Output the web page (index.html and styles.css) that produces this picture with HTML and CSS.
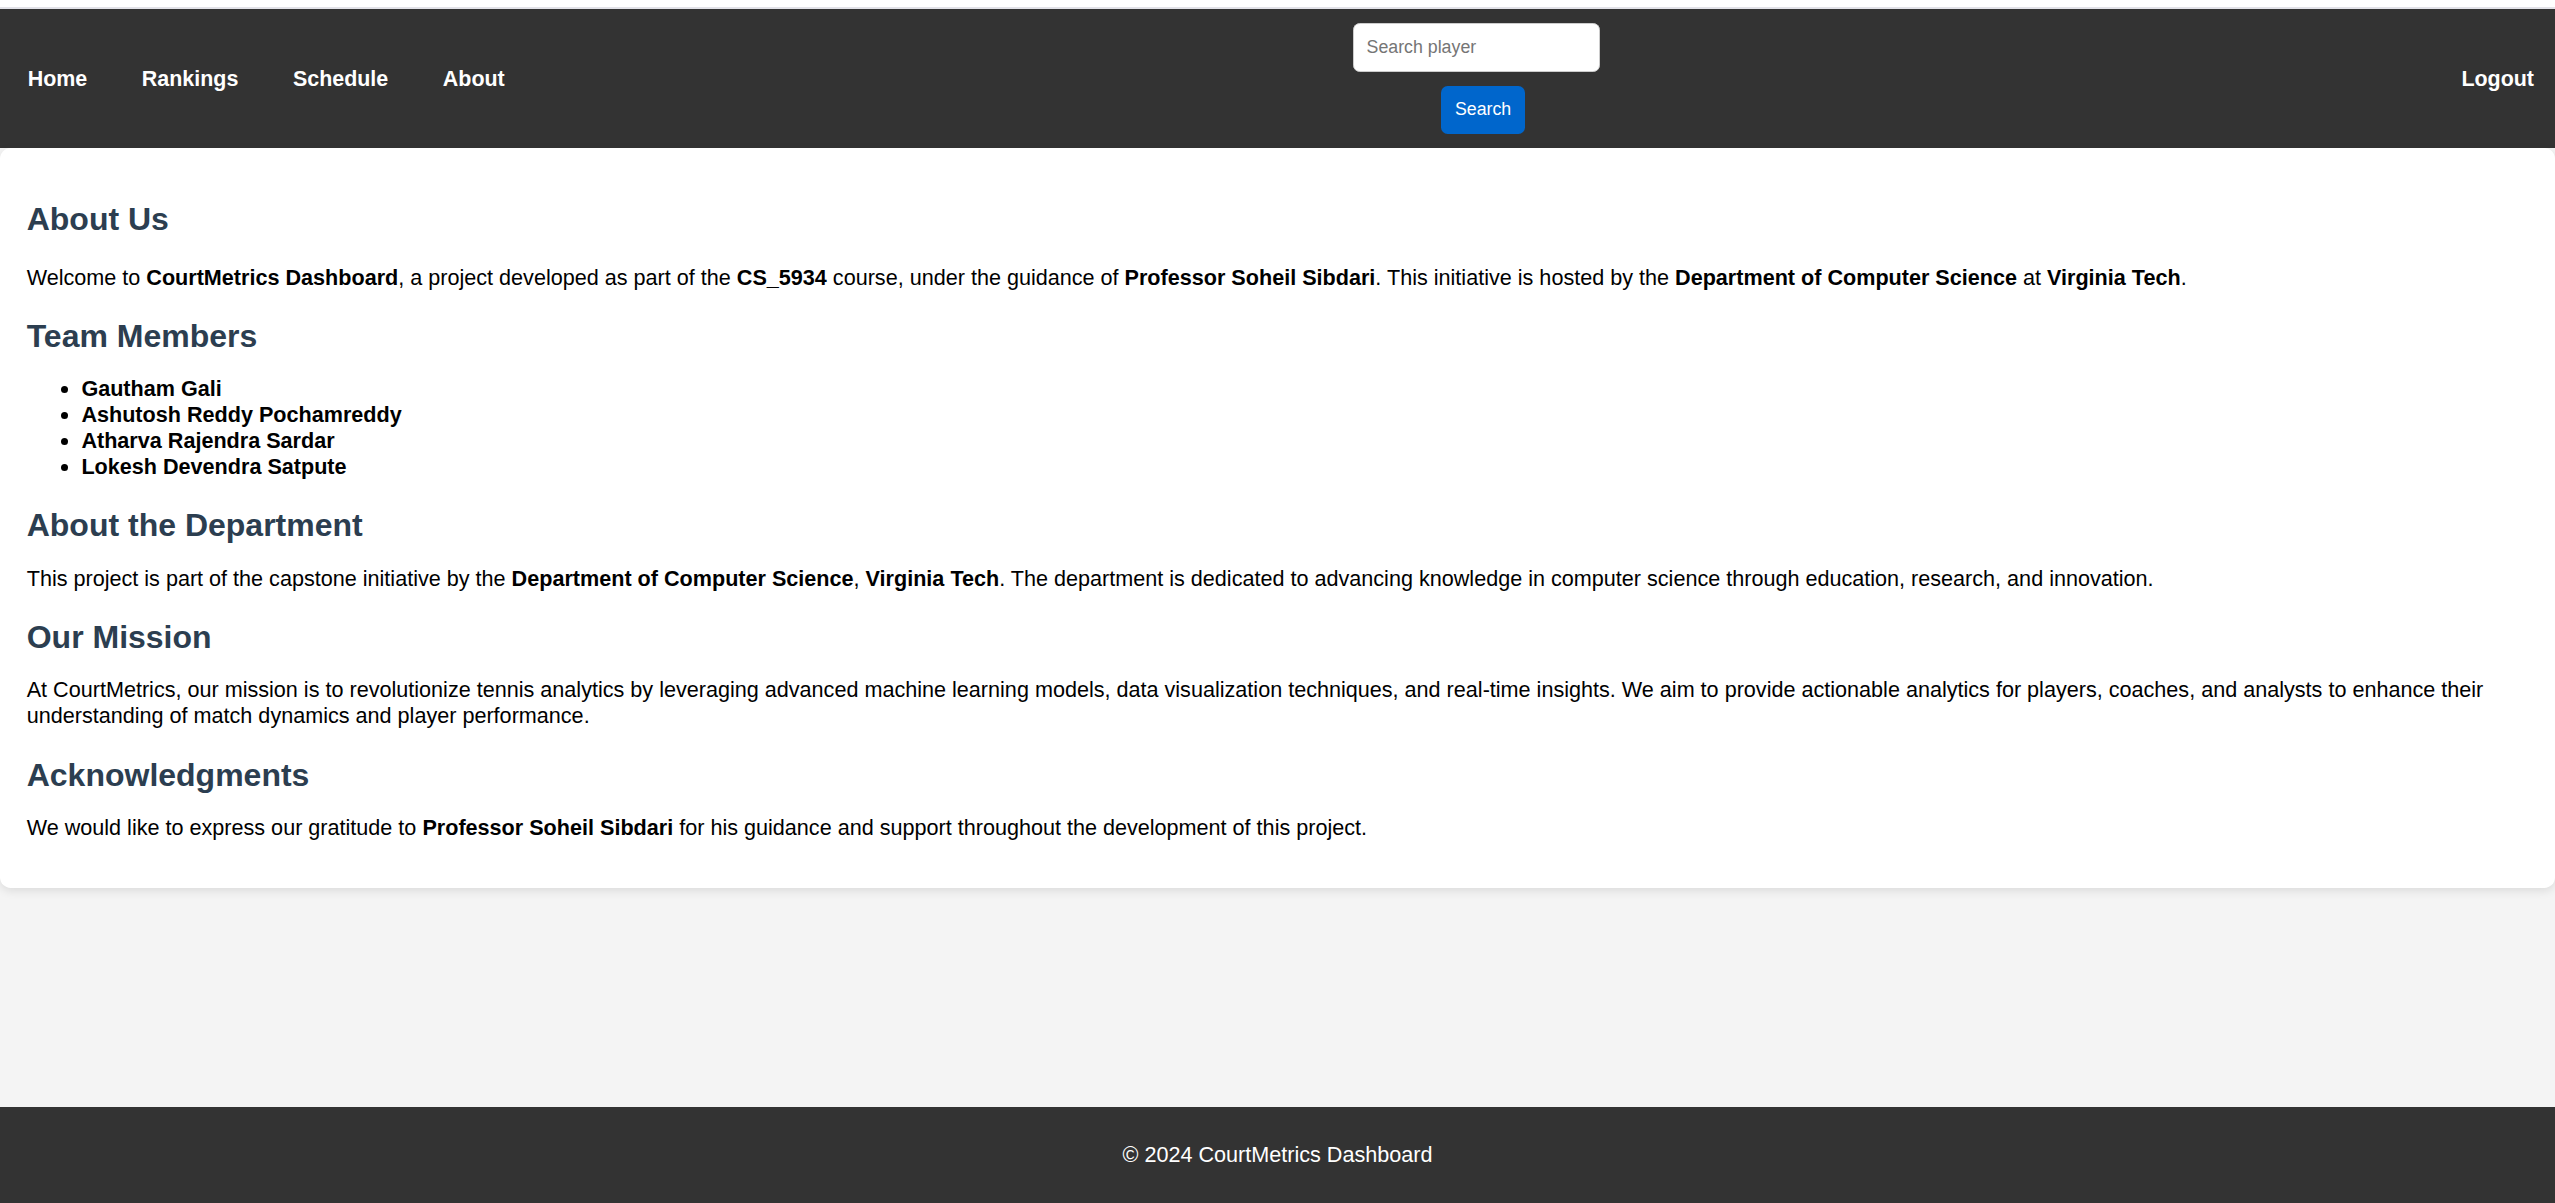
FILE: index.html
```html
<!DOCTYPE html>
<html lang="en">
<head>
<meta charset="utf-8">
<title>CourtMetrics Dashboard - About</title>
<link rel="stylesheet" href="styles.css">
</head>
<body>
<div class="topstrip"></div>
<nav class="navbar">
  <div class="nav-links">
    <a href="#" class="nav-link">Home</a>
    <a href="#" class="nav-link">Rankings</a>
    <a href="#" class="nav-link">Schedule</a>
    <a href="#" class="nav-link">About</a>
  </div>
  <form class="search-form">
    <input type="text" class="search-input" placeholder="Search player">
    <button type="button" class="search-btn">Search</button>
  </form>
  <a href="#" class="nav-link logout">Logout</a>
</nav>
<main class="main">
  <section class="card">
    <h2 class="heading first">About Us</h2>
    <p class="text intro">Welcome to <strong>CourtMetrics Dashboard</strong>, a project developed as part of the <strong>CS_5934</strong> course, under the guidance of <strong>Professor Soheil Sibdari</strong>. This initiative is hosted by the <strong>Department of Computer Science</strong> at <strong>Virginia Tech</strong>.</p>
    <h2 class="heading">Team Members</h2>
    <ul class="team">
      <li><strong>Gautham Gali</strong></li>
      <li><strong>Ashutosh Reddy Pochamreddy</strong></li>
      <li><strong>Atharva Rajendra Sardar</strong></li>
      <li><strong>Lokesh Devendra Satpute</strong></li>
    </ul>
    <h2 class="heading">About the Department</h2>
    <p class="text">This project is part of the capstone initiative by the <strong>Department of Computer Science</strong>, <strong>Virginia Tech</strong>. The department is dedicated to advancing knowledge in computer science through education, research, and innovation.</p>
    <h2 class="heading">Our Mission</h2>
    <p class="text">At CourtMetrics, our mission is to revolutionize tennis analytics by leveraging advanced machine learning models, data visualization techniques, and real-time insights. We aim to provide actionable analytics for players, coaches, and analysts to enhance their understanding of match dynamics and player performance.</p>
    <h2 class="heading">Acknowledgments</h2>
    <p class="text">We would like to express our gratitude to <strong>Professor Soheil Sibdari</strong> for his guidance and support throughout the development of this project.</p>
  </section>
</main>
<footer class="footer">
  <p class="footer-text">&copy; 2024 CourtMetrics Dashboard</p>
</footer>
</body>
</html>
```
FILE: styles.css
```css
* {
  box-sizing: border-box;
}

html, body {
  margin: 0;
  padding: 0;
}

body {
  font-family: "Liberation Sans", Arial, sans-serif;
  font-size: 21.6px;
  line-height: 26px;
  color: #000;
  background: #f4f4f4;
  min-height: 100vh;
  display: flex;
  flex-direction: column;
}

.topstrip {
  height: 9px;
  background: #fff;
  border-bottom: 2px solid #e2e2e8;
}

.navbar {
  background: #333;
  height: 139px;
  display: flex;
  align-items: center;
  justify-content: space-between;
  padding: 0 21px 0 27.7px;
}

.nav-links {
  display: flex;
  align-items: center;
  gap: 54.6px;
}

.nav-link {
  color: #fff;
  font-weight: bold;
  text-decoration: none;
  font-size: 21.45px;
  line-height: 26px;
}

.search-form {
  display: flex;
  flex-direction: column;
  align-items: center;
  gap: 13.7px;
  margin: 0;
}

.search-input {
  width: 247px;
  height: 49px;
  margin-right: 14px;
  border: 1px solid #ccc;
  border-radius: 6.7px;
  background: #fff;
  padding: 0 13px;
  font-family: "Liberation Sans", Arial, sans-serif;
  font-size: 17.78px;
  color: #333;
  outline: none;
}

.search-input::placeholder {
  color: #757575;
}

.search-btn {
  height: 48px;
  padding: 0 14px;
  border: none;
  border-radius: 6.7px;
  background: #0066cc;
  color: #fff;
  font-family: "Liberation Sans", Arial, sans-serif;
  font-size: 17.78px;
  cursor: pointer;
}

.main {
  flex: 1;
}

.card {
  background: #fff;
  border-radius: 10.67px;
  box-shadow: 0 3px 10px rgba(0, 0, 0, 0.1);
  padding: 26.7px 26.7px 25px;
}

.heading {
  font-size: 32px;
  line-height: 36.8px;
  font-weight: bold;
  color: #2c3e50;
  margin: 27.2px 0 13.3px;
}

.heading.first {
  margin-top: 26.6px;
}

.text {
  margin: 21.6px 0;
}

.text.intro {
  margin-top: 26.6px;
}

.team {
  margin: 21.6px 0;
  padding-left: 54.7px;
}

.footer {
  background: #333;
  color: #fff;
  text-align: center;
  padding: 13.3px;
}

.footer-text {
  margin: 21.6px 0;
}
```
